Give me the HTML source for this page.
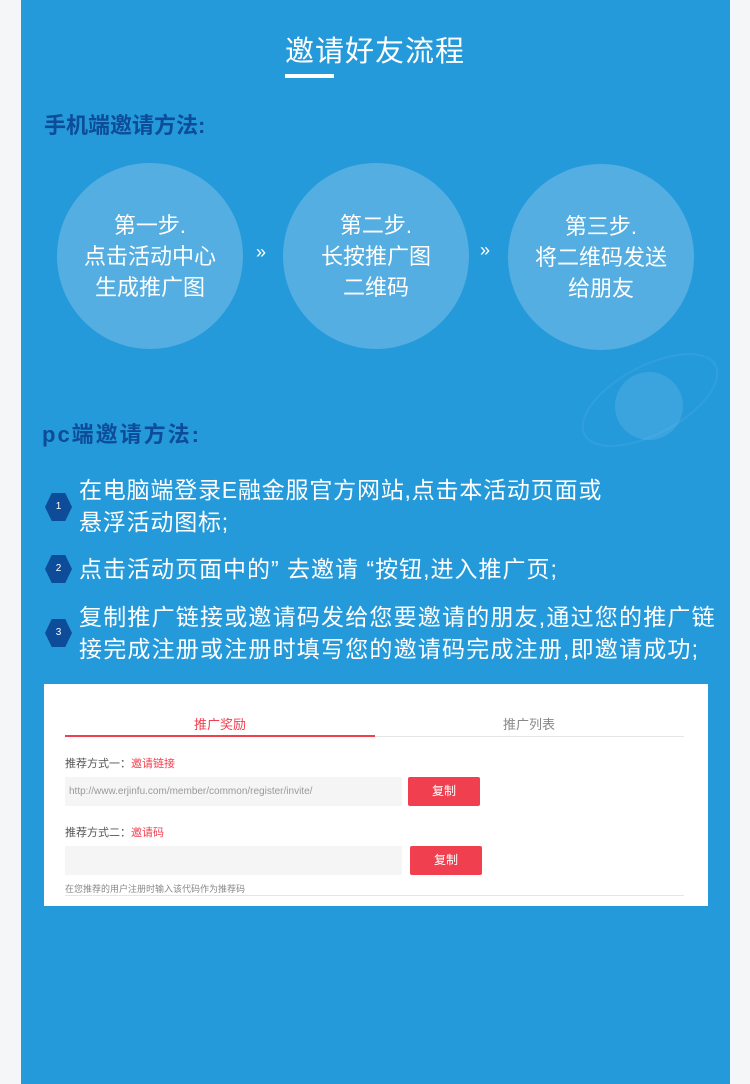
<!DOCTYPE html>
<html><head><meta charset="utf-8"><style>
*{margin:0;padding:0;box-sizing:border-box}
body{width:750px;height:1084px;background:#f4f6f8;font-family:"Liberation Sans","Noto Sans CJK SC",sans-serif;position:relative;overflow:hidden}
.bg{position:absolute;left:21px;top:0;width:709px;height:1084px;background:#259adb}
.abs{position:absolute}
.title{left:0;width:750px;top:28px;text-align:center;color:#fff;font-size:29px;letter-spacing:1px}
.ul{left:285px;top:74px;width:49px;height:4px;background:#fff}
.h{color:#0d4c98;font-weight:bold;font-size:22px}
.c{width:186px;height:186px;border-radius:50%;background:#55aee1;color:#fff;font-size:22px;line-height:31px;text-align:center;display:flex;align-items:center;justify-content:center}
.arr{color:#fff;font-size:18px}
.li{left:79px;color:#fff;font-size:23px;line-height:32px;letter-spacing:1px;white-space:nowrap}
.hex{width:27px;height:28px;background:#0d4c98;clip-path:polygon(25% 0,75% 0,100% 50%,75% 100%,25% 100%,0 50%);color:#fff;font-size:10px;text-align:center;line-height:28px;left:45px}
.card{left:44px;top:684px;width:664px;height:222px;background:#fff}
.red{color:#f04050}
.btn{background:#f04050;color:#fff;font-size:12px;text-align:center;line-height:28px;width:72px;height:29px;border-radius:2px}
.inp{background:#f5f5f5;height:29px;width:337px}
</style></head><body>
<div class="bg"></div>
<div class="abs" style="left:575px;top:365px;width:150px;height:70px;border-radius:50%;border:2px solid rgba(255,255,255,0.06);transform:rotate(-28deg)"></div>
<div class="abs" style="left:615px;top:372px;width:68px;height:68px;border-radius:50%;background:rgba(255,255,255,0.1)"></div>
<div class="abs title">邀请好友流程</div>
<div class="abs ul"></div>
<div class="abs h" style="left:44px;top:108px">手机端邀请方法:</div>
<div class="abs c" style="left:57px;top:163px">第一步.<br>点击活动中心<br>生成推广图</div>
<div class="abs arr" style="left:256px;top:242px">»</div>
<div class="abs c" style="left:283px;top:163px">第二步.<br>长按推广图<br>二维码</div>
<div class="abs arr" style="left:480px;top:240px">»</div>
<div class="abs c" style="left:508px;top:164px">第三步.<br>将二维码发送<br>给朋友</div>
<div class="abs h" style="left:42px;top:417px;letter-spacing:2px">pc端邀请方法:</div>
<div class="abs hex" style="top:493px">1</div>
<div class="abs li" style="top:474px;letter-spacing:0.8px">在电脑端登录E融金服官方网站,点击本活动页面或<br>悬浮活动图标;</div>
<div class="abs hex" style="top:555px">2</div>
<div class="abs li" style="top:553px">点击活动页面中的”&nbsp;去邀请&nbsp;“按钮,进入推广页;</div>
<div class="abs hex" style="top:619px">3</div>
<div class="abs li" style="top:601px;letter-spacing:1.2px">复制推广链接或邀请码发给您要邀请的朋友,通过您的推广链<br>接完成注册或注册时填写您的邀请码完成注册,即邀请成功;</div>
<div class="abs card">
 <div class="abs red" style="left:150px;top:30px;font-size:13px">推广奖励</div>
 <div class="abs" style="left:459px;top:30px;font-size:13px;color:#888">推广列表</div>
 <div class="abs" style="left:21px;top:51px;width:310px;height:2px;background:#f04050"></div>
 <div class="abs" style="left:331px;top:52px;width:309px;height:1px;background:#e5e5e5"></div>
 <div class="abs" style="left:21px;top:71px;font-size:11px;color:#555">推荐方式一：<span class="red">邀请链接</span></div>
 <div class="abs inp" style="left:21px;top:93px"><span style="font-size:10px;color:#999;line-height:29px;padding-left:4px">http://www.erjinfu.com/member/common/register/invite/</span></div>
 <div class="abs btn" style="left:364px;top:93px">复制</div>
 <div class="abs" style="left:21px;top:140px;font-size:11px;color:#555">推荐方式二：<span class="red">邀请码</span></div>
 <div class="abs inp" style="left:21px;top:162px"></div>
 <div class="abs btn" style="left:366px;top:162px">复制</div>
 <div class="abs" style="left:21px;top:198px;font-size:9px;color:#888">在您推荐的用户注册时输入该代码作为推荐码</div>
 <div class="abs" style="left:21px;top:211px;width:619px;height:1px;background:#e5e5e5"></div>
</div>
</body></html>
